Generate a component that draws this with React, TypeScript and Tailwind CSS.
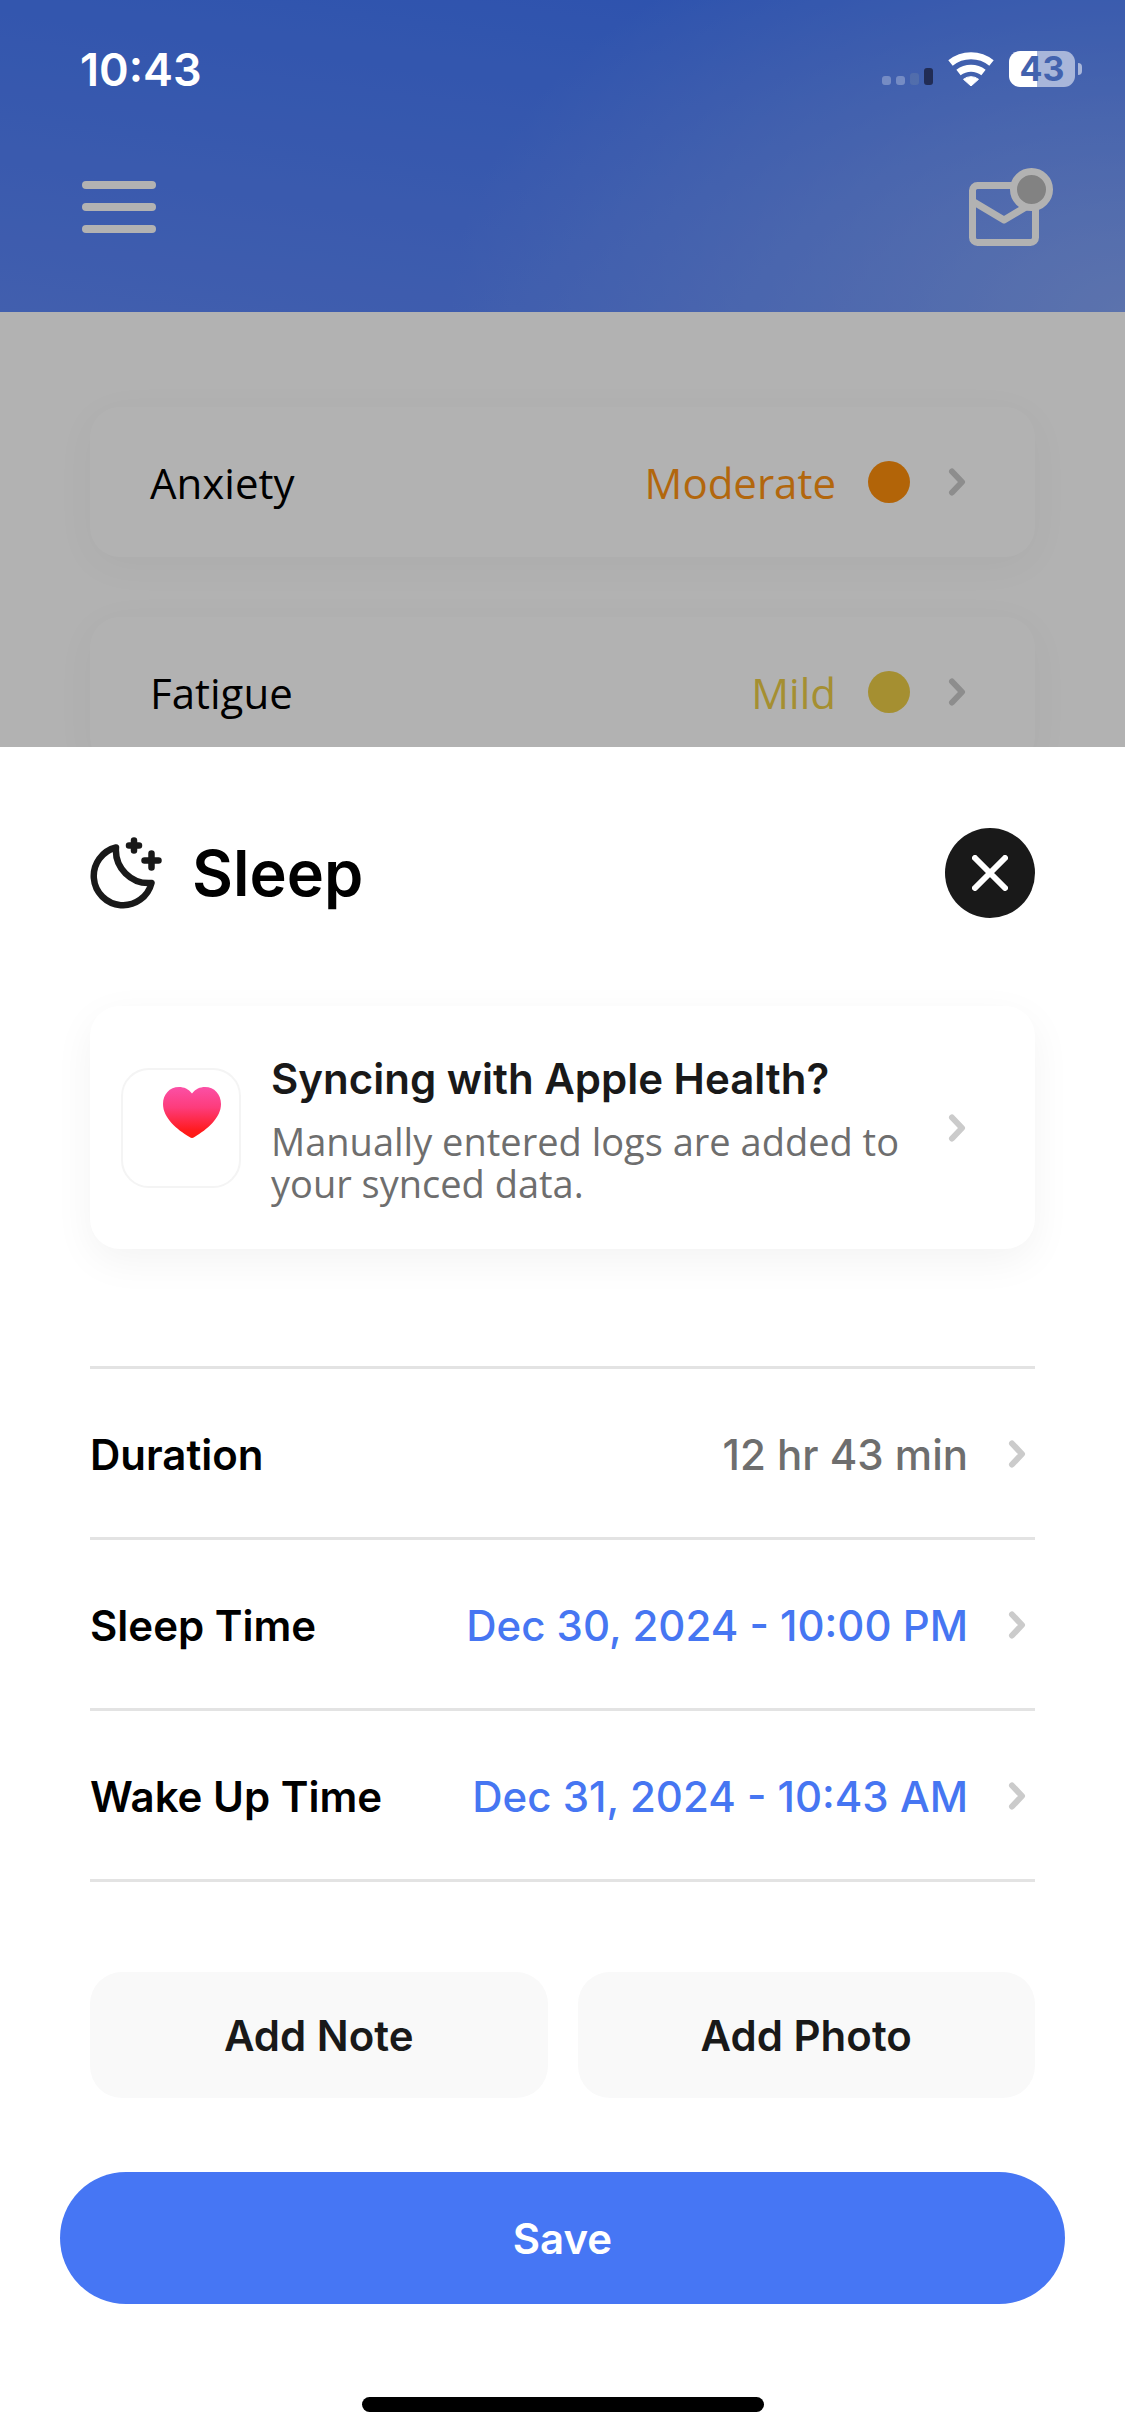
import type { ReactNode } from 'react'

interface Symptom {
  name: string
  level: string
  textClass: string
  dotClass: string
}

interface SleepField {
  label: string
  value: string
  valueClass: string
}

const symptoms: Symptom[] = [
  { name: 'Anxiety', level: 'Moderate', textClass: 'text-[#ff9414]', dotClass: 'bg-[#ff900c]' },
  { name: 'Fatigue', level: 'Mild', textClass: 'text-[#eccd47]', dotClass: 'bg-[#eccd47]' },
]

const fields: SleepField[] = [
  { label: 'Duration', value: '12 hr 43 min', valueClass: 'text-[#6e6e6e]' },
  { label: 'Sleep Time', value: 'Dec 30, 2024 - 10:00 PM', valueClass: 'text-[#4676f2]' },
  { label: 'Wake Up Time', value: 'Dec 31, 2024 - 10:43 AM', valueClass: 'text-[#4676f2]' },
]

function Chevron() {
  return (
    <svg className="shrink-0 text-[#cbcbcb]" width="18" height="30" viewBox="0 0 18 30" fill="none" stroke="currentColor" strokeWidth="6" strokeLinecap="round" strokeLinejoin="round">
      <path d="M4 4.500 14 15 4 25.500" />
    </svg>
  )
}

function MoonIcon() {
  return (
    <svg width="72" height="72" viewBox="0 0 72 72" fill="none" stroke="#191919" strokeWidth="6.5" strokeLinecap="round" strokeLinejoin="round">
      <path d="M26 10.500A29.300 29.300 0 1 0 61.500 46A33 33 0 0 1 26 10.500Z" />
      <path d="M44 3.500v10M39 8.500h10M61.500 16.500v14M54.500 23.500h14" />
    </svg>
  )
}

function StatusBar() {
  return (
    <div className="z-20 flex h-[138px] items-center justify-between self-start pr-[43px] pl-20 text-white">
      <span className="text-[45px] leading-none font-semibold">10:43</span>
      <div className="flex items-center">
        <svg width="51" height="36" viewBox="0 0 51 36">
          <rect y="25" width="9" height="9" rx="3" fill="#fff" fillOpacity=".28" />
          <rect x="14" y="25" width="9" height="9" rx="3" fill="#fff" fillOpacity=".28" />
          <rect x="28" y="22" width="9" height="12" rx="3" fill="#6f86a8" fillOpacity=".35" />
          <rect x="42" y="17" width="9" height="17" rx="3" fill="#212c55" />
        </svg>
        <svg className="ml-[15px]" width="46" height="34" viewBox="0 0 46 34">
          <path d="M2.500 11A32.500 32.500 0 0 1 43.500 11M10.500 20.500A20.500 20.500 0 0 1 35.500 20.500" fill="none" stroke="#fff" strokeWidth="7" />
          <path d="M15.500 27.300A12 12 0 0 1 30.500 27.300L23 34Z" fill="#fff" stroke="#fff" strokeLinejoin="round" />
        </svg>
        <div className="ml-[15px] flex h-9 w-[66px] items-center justify-center rounded-[11px] bg-linear-to-r from-white from-[42%] to-[#a8b6da] to-[42%] text-[34px] leading-none font-bold text-[#4262ae]">
          43
        </div>
        <div className="ml-[3px] h-3 w-1 rounded-r-full bg-[#a8b6da]" />
      </div>
    </div>
  )
}

function AppHeader() {
  return (
    <header className="flex h-[312px] items-start justify-between bg-[radial-gradient(ellipse_60%_140%_at_100%_100%,#84a5f8_0%,#84a5f800_100%),linear-gradient(188deg,#4277fa_10%,#5e88fa_100%)] pt-[168px] pr-[71px] pl-[82px]">
      <button type="button" aria-label="Menu" className="mt-[13px] flex flex-col gap-[14px]">
        <span className="h-2 w-[74px] rounded-full bg-white" />
        <span className="h-2 w-[74px] rounded-full bg-white" />
        <span className="h-2 w-[74px] rounded-full bg-white" />
      </button>
      <button type="button" aria-label="Messages">
        <svg width="85" height="78" viewBox="0 0 85 78" fill="none">
          <rect x="3.500" y="17.500" width="63" height="57" rx="5" stroke="#fff" strokeWidth="7" />
          <path d="M4 33.500 35 52 66 33.500" stroke="#fff" strokeWidth="7" strokeLinejoin="round" />
          <circle cx="62.500" cy="21.500" r="18" fill="#bbb" stroke="#fff" strokeWidth="7" />
        </svg>
      </button>
    </header>
  )
}

function SymptomCard({ symptom }: { symptom: Symptom }) {
  return (
    <button type="button" className="flex h-[150px] w-full items-center rounded-[30px] bg-white pr-[69px] pl-[60px] font-['Open_Sans','Noto_Sans',sans-serif] text-[42px] shadow-[0_8px_40px_rgba(0,0,0,0.04)]">
      <span className="text-black">{symptom.name}</span>
      <span className={`ml-auto ${symptom.textClass}`}>{symptom.level}</span>
      <span className={`mr-[38px] ml-8 size-[42px] rounded-full ${symptom.dotClass}`} />
      <Chevron />
    </button>
  )
}

function HealthCard() {
  return (
    <button type="button" className="mt-[88px] flex h-[243px] w-full items-center rounded-[30px] bg-white pr-[69px] pl-[31px] text-left shadow-[0_12px_40px_rgba(0,0,0,0.05)]">
      <span className="flex size-[120px] shrink-0 rounded-[28px] border-2 border-[#f4f4f4] pt-[17px] pl-10">
        <svg width="58" height="51" viewBox="0 0 58 51">
          <defs>
            <linearGradient id="heart" x1="0" y1="0" x2="0" y2="1">
              <stop offset="0" stopColor="#fb50a6" />
              <stop offset=".4" stopColor="#fd3c7c" />
              <stop offset=".85" stopColor="#ff1b1f" />
              <stop offset="1" stopColor="#ff1a12" />
            </linearGradient>
          </defs>
          <path fill="url(#heart)" d="M29 6.500C25.500 2 21 0 16 0C6.500 0 0 7.500 0 17C0 31 14 42.500 26.500 50C28.500 51.200 29.500 51.200 31.500 50C44 42.500 58 31 58 17C58 7.500 51.500 0 42 0C37 0 32.500 2 29 6.500Z" />
        </svg>
      </span>
      <span className="ml-[30px] flex-1 pr-6">
        <span className="block text-[42px] leading-[54px] font-semibold text-[#191919]">Syncing with Apple Health?</span>
        <span className="mt-[14px] block font-['Open_Sans','Noto_Sans',sans-serif] text-[38px] leading-[42px] text-[#6e6e6e]">
          Manually entered logs are added to your synced data.
        </span>
      </span>
      <Chevron />
    </button>
  )
}

function FieldRow({ field }: { field: SleepField }) {
  return (
    <button type="button" className="flex h-[171px] w-full items-center border-t-[3px] border-[#e3e3e3] pt-[2px] pr-[9px] text-[42px] font-semibold">
      <span className="text-black">{field.label}</span>
      <span className={`mr-10 ml-auto font-medium ${field.valueClass}`}>{field.value}</span>
      <Chevron />
    </button>
  )
}

function SoftButton({ children }: { children: ReactNode }) {
  return (
    <button type="button" className="h-[126px] rounded-[32px] bg-[#f9f9f9] text-[42px] font-semibold text-[#191919]">
      {children}
    </button>
  )
}

function SleepSheet() {
  return (
    <section role="dialog" aria-labelledby="sheet-title" className="z-20 self-end bg-white pt-[81px] pb-6">
      <div className="px-[90px]">
        <div className="flex h-[90px] items-center">
          <MoonIcon />
          <h2 id="sheet-title" className="ml-[30px] text-[63px] leading-none font-semibold text-black">Sleep</h2>
          <button type="button" aria-label="Close" className="ml-auto flex size-[90px] items-center justify-center rounded-full bg-[#191919]">
            <svg width="36" height="36" viewBox="0 0 36 36" stroke="#fff" strokeWidth="6" strokeLinecap="round">
              <path d="M3 3 33 33M33 3 3 33" />
            </svg>
          </button>
        </div>

        <HealthCard />

        <div className="mt-[117px] border-b-[3px] border-[#e3e3e3]">
          {fields.map((field) => (
            <FieldRow key={field.label} field={field} />
          ))}
        </div>

        <div className="mt-[90px] grid grid-cols-2 gap-[30px]">
          <SoftButton>Add Note</SoftButton>
          <SoftButton>Add Photo</SoftButton>
        </div>
      </div>

      <div className="mt-[74px] px-[60px]">
        <button type="button" className="h-[132px] w-full rounded-full bg-[#4676f4] text-[42px] font-semibold text-white">
          Save
        </button>
      </div>

      {/* home indicator */}
      <div className="mx-auto mt-[93px] h-[15px] w-[402px] rounded-full bg-black" />
    </section>
  )
}

export default function App() {
  return (
    <div className="grid min-h-screen grid-cols-1 bg-white font-['Inter','Liberation_Sans',sans-serif] *:[grid-area:1/1]">
      <main>
        <AppHeader />
        <div className="flex flex-col gap-[60px] px-[90px] pt-[95px]">
          {symptoms.map((symptom) => (
            <SymptomCard key={symptom.name} symptom={symptom} />
          ))}
        </div>
      </main>
      <div className="z-10 bg-black/30" />
      <StatusBar />
      <SleepSheet />
    </div>
  )
}
